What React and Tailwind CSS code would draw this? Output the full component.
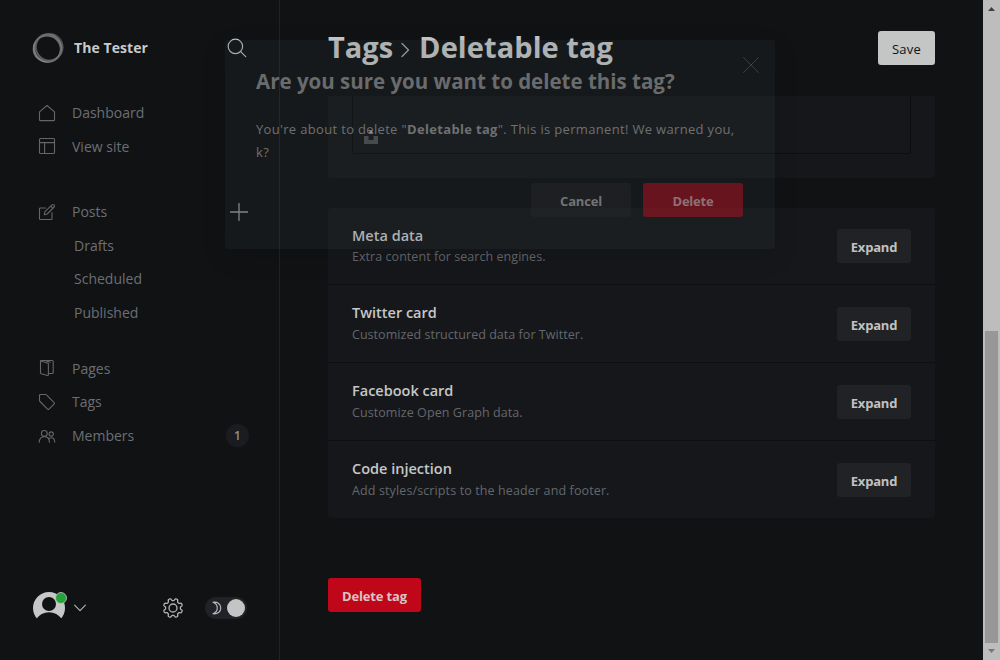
import React from 'react';

const Icon = ({ size = 18, box = 18, className = '', children, w = 1 }) => (
  <svg width={size} height={size} viewBox={`0 0 ${box} ${box}`} fill="none" stroke="currentColor" strokeWidth={w} strokeLinecap="round" strokeLinejoin="round" className={`shrink-0 ${className}`}>
    {children}
  </svg>
);

const icons = {
  home: <path d="M1.5 7.8 9 1.5l7.5 6.3v8.2a.6.6 0 0 1-.6.6H2.1a.6.6 0 0 1-.6-.6z" />,
  layout: <><rect x="1.5" y="1.5" width="15" height="15" rx="1" /><path d="M1.5 5.6h15M6.6 5.6v10.9" /></>,
  edit: <><path d="M14 9.5v6.2a.8.8 0 0 1-.8.8H2.3a.8.8 0 0 1-.8-.8V5.8a.8.8 0 0 1 .8-.8h5.2" /><path d="m6.3 11.7.7-3L14 1.9a1.4 1.4 0 0 1 2 0l.1.1a1.4 1.4 0 0 1 0 2l-6.9 7zM12.8 3.2l2.1 2.1" /></>,
  pages: <><path d="M2.5 2.2v11.6a1 1 0 0 0 .8 1l6.2 1.700a.7.7 0 0 0 .9-.7V5.1a1 1 0 0 0-.8-1L2.800 1.900z" /><path d="M2.8 1.500h11.400a1 1 0 0 1 1 1v11a1 1 0 0 1-1 1h-3.800M8 1.700l4.200 1.500" /></>,
  tag: <path d="M1.5 2.3a.8.8 0 0 1 .8-.8h5.2a1.5 1.5 0 0 1 1 .4l7.6 7.8a1 1 0 0 1 0 1.4l-5.2 5.1a1 1 0 0 1-1.4 0L2 8.5a1.5 1.5 0 0 1-.5-1z" />,
  members: <><circle cx="6.3" cy="6.4" r="2.9" /><circle cx="13.2" cy="7" r="2.1" /><path d="M1.2 15.3c0-3.5 2.2-5.7 5.1-5.7s5.1 2.2 5.1 5.7M11.3 11.4c.6-.5 1.2-.7 2-.7 2 0 3.400 1.800 3.400 4.400" /></>,
};

const NavRow = ({ icon, label, children }) => (
  <div className="flex h-[33.6px] items-center pl-[38px]">
    <Icon className="text-[#64666a]" w={1.1}>{icons[icon]}</Icon>
    <span className="ml-4">{label}</span>
    {children}
  </div>
);

const SubRow = ({ label }) => <div className="flex h-[33.6px] items-center pl-[74px]">{label}</div>;

const gearPath = (() => {
  const pts = [];
  for (let i = 0; i < 160; i++) {
    const t = (i / 160) * Math.PI * 2;
    const r = 8.5 + 1.15 * Math.tanh(-Math.cos(8 * t) * 2);
    pts.push(`${(11 + r * Math.cos(t)).toFixed(2)} ${(11 + r * Math.sin(t)).toFixed(2)}`);
  }
  return `M${pts.join('L')}Z`;
})();

function Sidebar() {
  return (
    <aside className="flex h-full w-[280px] shrink-0 flex-col border-r border-[#202226] text-[14px] text-[#6b6f74]">
      <div className="flex h-24 items-center pl-8">
        <svg width="32" height="32" viewBox="0 0 32 32" fill="none">
          <circle cx="15.8" cy="16.2" r="13.6" stroke="#77787a" strokeWidth="2" />
          <ellipse cx="14.900" cy="16.900" rx="13.600" ry="13" stroke="#8b8c8e" strokeWidth="1.200" opacity=".8" />
          <ellipse cx="17.200" cy="14.800" rx="13.400" ry="13.300" stroke="#6b6c6e" strokeWidth="1.600" opacity=".7" transform="rotate(12 16 16)" />
          <ellipse cx="16" cy="16" rx="12" ry="13.8" stroke="#66676a" strokeWidth="1.400" opacity=".7" transform="rotate(-35 16 16)" />
        </svg>
        <span className="-mt-px ml-[10px] font-bold tracking-[0.07px] text-[#c9cacb]">The Tester</span>
        <Icon size={20} box={20} className="ml-[79px] text-[#bfc0c1]" w={1.2}><circle cx="8.4" cy="8.4" r="7.2" /><path d="m13.7 13.7 5 5" /></Icon>
      </div>
      <nav>
        <NavRow icon="home" label="Dashboard" />
        <NavRow icon="layout" label="View site" />
        <div className="mt-[31.6px]">
          <NavRow icon="edit" label="Posts">
            <Icon className="ml-[123px] text-[#929394]" w={1.3}><path d="M9 .5v17M.5 9h17" /></Icon>
          </NavRow>
          <SubRow label="Drafts" />
          <SubRow label="Scheduled" />
          <SubRow label="Published" />
        </div>
        <div className="mt-[22.4px]">
          <NavRow icon="pages" label="Pages" />
          <NavRow icon="tag" label="Tags" />
          <NavRow icon="members" label="Members">
            <span className="ml-auto mr-[30px] flex size-[23px] items-center justify-center rounded-full bg-[#1b1c20] pt-px text-[12px] font-semibold text-[#8f9193]">1</span>
          </NavRow>
        </div>
      </nav>
      <div className="mt-auto mb-[34px] flex h-9 items-center pl-8">
        <svg width="36" height="36" viewBox="0 0 36 36">
          <circle cx="17" cy="18" r="16" fill="#c7c7c7" />
          <circle cx="17" cy="14" r="7" fill="#111214" />
          <path d="M4 29.200Q9 22.200 17 22.200T30 29.200V36H4Z" fill="#111214" />
          <circle cx="29" cy="8" r="5.5" fill="#25a437" stroke="#c7c7c7" strokeWidth=".8" />
        </svg>
        <Icon size={14} box={14} className="ml-[5px] text-[#b5b6b7]" w={1.1}><path d="m1.6 4.2 5.4 5.4 5.4-5.4" /></Icon>
        <Icon size={22} box={22} className="ml-[75px] text-[#b2b3b4]" w={1.3}><path d={gearPath} /><circle cx="11" cy="11" r="4" /></Icon>
        <span className="ml-[21px] flex h-[22px] w-[42px] items-center rounded-full bg-[#212227] pl-[7px] pr-[2px]">
          <svg width="11" height="14" viewBox="0 0 11 14" fill="none" stroke="#b6b7b8" strokeWidth="1.200" strokeLinejoin="round"><path d="M1 1.300C5.500.6 8.800 3.200 8.800 7S5.500 13.400 1 12.700C3.800 11.600 5.300 9.600 5.300 7S3.800 2.400 1 1.300z" /></svg>
          <span className="ml-auto size-[18px] rounded-full bg-[#c4c4c4]" />
        </span>
      </div>
    </aside>
  );
}

const sections = [
  ['Meta data', 'Extra content for search engines.', 'tracking-[0.05px]'],
  ['Twitter card', 'Customized structured data for Twitter.', 'tracking-[0.04px]'],
  ['Facebook card', 'Customize Open Graph data.', 'tracking-[0.08px]'],
  ['Code injection', 'Add styles/scripts to the header and footer.', 'tracking-[0.12px]'],
];

const rowBox = [
  'h-[77px] pt-[21px] border-b',
  'h-[78px] pt-[22px] border-b',
  'h-[78px] pt-[22px] border-b',
  'h-[77px] pt-[22px]',
];

function Content() {
  return (
    <main className="flex h-full min-w-0 flex-1 flex-col items-start px-12">
      <header className="flex h-24 w-full shrink-0 items-center justify-between">
        <h1 className="-mt-[3px] flex items-center text-[29px] leading-none font-bold text-[#c8c9ca]">
          <span>Tags</span>
          <Icon size={16} box={16} className="mt-[7px] ml-[5px] text-[#a8a9aa]" w={1.3}><path d="m4 1.500 6.500 6.500L4 14.500" /></Icon>
          <span className="ml-[5px] tracking-[0.07px]">Deletable tag</span>
        </h1>
        <button className="h-[34px] w-[57px] rounded-[3px] bg-[#c4c5c5] pt-[3px] text-[13px] font-medium tracking-[0.2px] text-[#111214]">Save</button>
      </header>
      <section className="flex h-[82px] w-full shrink-0 rounded-b-[3px] bg-[#16171b] px-6">
        <div className="flex h-[58px] flex-1 items-end rounded-b-[3px] border border-t-0 border-[#0c0d0f] pb-[9px] pl-[11px]">
          <svg width="14" height="14" viewBox="0 0 14 14">
            <path d="M0 6h4.500v4h5V6H14v8H0z" fill="#4d4e51" />
            <path d="M4.500 3.500 6 1h2l1.500 2.500z" fill="#a0a1a3" />
          </svg>
        </div>
      </section>
      <section className="mt-[30px] w-full shrink-0 rounded-[3px] bg-[#16171b]">
        {sections.map(([title, text, ls], i) => (
          <div key={title} className={`flex items-start justify-between border-[#0e0f11] px-6 ${rowBox[i]}`}>
            <div className={i === 0 ? '-mt-[3px]' : '-mt-[4px]'}>
              <h4 className="text-[14.5px] leading-5 font-semibold text-[#c6c7c8]">{title}</h4>
              <p className={`text-[12.5px] leading-5 text-[#64676b] ${i === 0 ? 'mt-px' : 'mt-0.5'} ${ls}`}>{text}</p>
            </div>
            <button className="h-[34px] w-[74px] rounded-[3px] bg-[#212225] pt-[3px] text-[13px] font-bold tracking-[-0.2px] text-[#c0c1c2]">Expand</button>
          </div>
        ))}
      </section>
      <button className="mt-[60px] h-[34px] w-[93px] rounded-[3px] bg-[#bf0719] pt-[3px] text-[13px] font-bold tracking-[-0.15px] text-[#d8c3c6]">Delete tag</button>
    </main>
  );
}

function Scrollbar() {
  return (
    <div className="flex h-full w-[17px] shrink-0 flex-col items-center bg-[#bdbdbd]">
      <svg width="17" height="17" viewBox="0 0 17 17"><path d="M5 11 8.500 7l3.500 4z" fill="#404040" /></svg>
      <div className="mt-[314px] h-[312px] w-[13px] bg-[#979797]" />
      <svg width="17" height="17" viewBox="0 0 17 17"><path d="M5 6h7l-3.500 4z" fill="#777" /></svg>
    </div>
  );
}

function Modal() {
  return (
    <div className="absolute top-10 left-[225px] h-[209px] w-[550px] rounded-[3px] bg-[rgba(50,64,68,0.17)] px-8 pt-[26px] shadow-[0_8px_26px_rgba(0,0,0,0.12)]">
      <Icon size={18} box={18} className="absolute top-4 right-[15px] text-[#3c3f42]"><path d="m1.500 1.500 15 15M16.500 1.500l-15 15" /></Icon>
      <h2 className="-ml-px text-[20.5px] leading-[30px] font-bold whitespace-nowrap text-[#696b6d]">Are you sure you want to delete this tag?</h2>
      <p className="mt-[22px] -ml-px text-[13px] leading-[23px] tracking-[0.33px] whitespace-nowrap text-[#6e7072]">
        You're about to delete "<strong>Deletable tag</strong>". This is permanent! We warned you,<br />k?
      </p>
      <div className="mt-[19px] flex justify-end gap-3 text-[13px] font-bold tracking-[-0.2px] text-[#727476]">
        <button className="h-[34px] w-[100px] rounded-[3px] bg-[rgba(50,51,56,0.26)] pt-[3px]">Cancel</button>
        <button className="h-[34px] w-[100px] rounded-[3px] bg-[rgba(185,16,35,0.5)] pt-[3px] text-[#8f7074]">Delete</button>
      </div>
    </div>
  );
}

export default function App() {
  return (
    <div className="relative flex h-[660px] w-[1000px] overflow-hidden bg-[#111214] font-['Open_Sans',sans-serif]">
      <Sidebar />
      <Content />
      <Scrollbar />
      <Modal />
    </div>
  );
}
